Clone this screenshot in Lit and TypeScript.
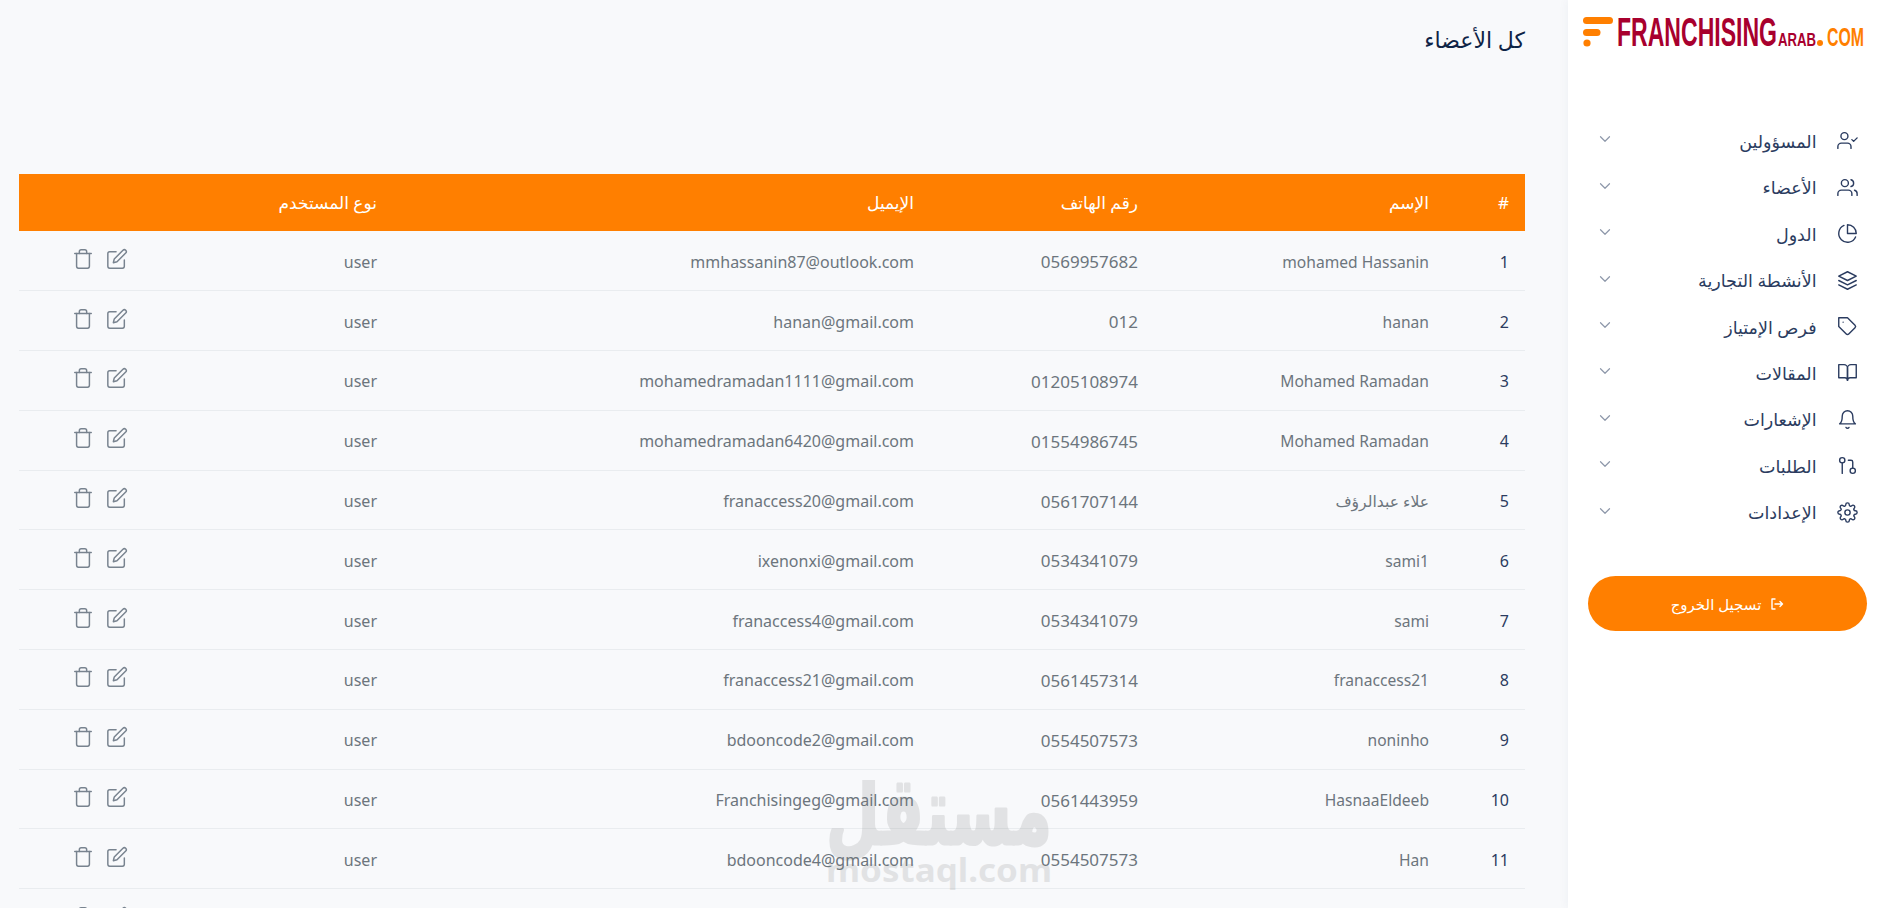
import { LitElement, html, css, svg } from "lit";
import { customElement } from "lit/decorators.js";

const ic = (body: unknown, size = 21) => html`<svg width=${size} height=${size} viewBox="0 0 24 24" fill="none" stroke="currentColor" stroke-width="1.6" stroke-linecap="round" stroke-linejoin="round">${body}</svg>`;

const menu: [string, unknown][] = [
  ["المسؤولين", svg`<path d="M16 21v-2a4 4 0 0 0-4-4H5a4 4 0 0 0-4 4v2"/><circle cx="8.5" cy="7" r="4"/><polyline points="17 11 19 13 23 9"/>`],
  ["الأعضاء", svg`<path d="M17 21v-2a4 4 0 0 0-4-4H5a4 4 0 0 0-4 4v2"/><circle cx="9" cy="7" r="4"/><path d="M23 21v-2a4 4 0 0 0-3-3.87"/><path d="M16 3.13a4 4 0 0 1 0 7.75"/>`],
  ["الدول", svg`<path d="M21.21 15.89A10 10 0 1 1 8 2.83"/><path d="M22 12A10 10 0 0 0 12 2v10z"/>`],
  ["الأنشطة التجارية", svg`<polygon points="12 2 2 7 12 12 22 7 12 2"/><polyline points="2 17 12 22 22 17"/><polyline points="2 12 12 17 22 12"/>`],
  ["فرص الإمتياز", svg`<path d="M20.59 13.41l-7.17 7.17a2 2 0 0 1-2.83 0L2 12V2h10l8.59 8.59a2 2 0 0 1 0 2.82z"/><line x1="7" y1="7" x2="7.01" y2="7"/>`],
  ["المقالات", svg`<path d="M2 3h6a4 4 0 0 1 4 4v14a3 3 0 0 0-3-3H2z"/><path d="M22 3h-6a4 4 0 0 0-4 4v14a3 3 0 0 1 3-3h7z"/>`],
  ["الإشعارات", svg`<path d="M18 8A6 6 0 0 0 6 8c0 7-3 9-3 9h18s-3-2-3-9"/><path d="M13.73 21a2 2 0 0 1-3.46 0"/>`],
  ["الطلبات", svg`<circle cx="18" cy="18" r="3"/><circle cx="6" cy="6" r="3"/><path d="M13 6h3a2 2 0 0 1 2 2v7"/><line x1="6" y1="9" x2="6" y2="21"/>`],
  ["الإعدادات", svg`<circle cx="12" cy="12" r="3"/><path d="M19.4 15a1.65 1.65 0 0 0 .33 1.82l.06.06a2 2 0 0 1 0 2.83 2 2 0 0 1-2.83 0l-.06-.06a1.65 1.65 0 0 0-1.82-.33 1.65 1.65 0 0 0-1 1.51V21a2 2 0 0 1-2 2 2 2 0 0 1-2-2v-.09A1.65 1.65 0 0 0 9 19.4a1.65 1.65 0 0 0-1.82.33l-.06.06a2 2 0 0 1-2.83 0 2 2 0 0 1 0-2.83l.06-.06a1.65 1.65 0 0 0 .33-1.82 1.65 1.65 0 0 0-1.51-1H3a2 2 0 0 1-2-2 2 2 0 0 1 2-2h.09A1.65 1.65 0 0 0 4.6 9a1.65 1.65 0 0 0-.33-1.82l-.06-.06a2 2 0 0 1 0-2.83 2 2 0 0 1 2.83 0l.06.06a1.65 1.65 0 0 0 1.82.33H9a1.65 1.65 0 0 0 1-1.51V3a2 2 0 0 1 2-2 2 2 0 0 1 2 2v.09a1.65 1.65 0 0 0 1 1.51 1.65 1.65 0 0 0 1.82-.33l.06-.06a2 2 0 0 1 2.83 0 2 2 0 0 1 0 2.83l-.06.06a1.65 1.65 0 0 0-.33 1.82V9a1.65 1.65 0 0 0 1.51 1H21a2 2 0 0 1 2 2 2 2 0 0 1-2 2h-.09a1.65 1.65 0 0 0-1.51 1z"/>`],
];

const rows = [
  ["mohamed Hassanin", "0569957682", "mmhassanin87@outlook.com"],
  ["hanan", "012", "hanan@gmail.com"],
  ["Mohamed Ramadan", "01205108974", "mohamedramadan1111@gmail.com"],
  ["Mohamed Ramadan", "01554986745", "mohamedramadan6420@gmail.com"],
  ["علاء عبدالرؤف", "0561707144", "franaccess20@gmail.com"],
  ["sami1", "0534341079", "ixenonxi@gmail.com"],
  ["sami", "0534341079", "franaccess4@gmail.com"],
  ["franaccess21", "0561457314", "franaccess21@gmail.com"],
  ["noninho", "0554507573", "bdooncode2@gmail.com"],
  ["HasnaaEldeeb", "0561443959", "Franchisingeg@gmail.com"],
  ["Han", "0554507573", "bdooncode4@gmail.com"],
];

const actions = html`<div class="acts">
  ${ic(svg`<path d="M11 4H4a2 2 0 0 0-2 2v14a2 2 0 0 0 2 2h14a2 2 0 0 0 2-2v-7"/><path d="M18.5 2.5a2.121 2.121 0 0 1 3 3L12 15l-4 1 1-4 9.5-9.5z"/>`, 22)}
  ${ic(svg`<polyline points="3 6 5 6 21 6"/><path d="M19 6v14a2 2 0 0 1-2 2H7a2 2 0 0 1-2-2V6m3 0V4a2 2 0 0 1 2-2h4a2 2 0 0 1 2 2v2"/>`, 22)}
</div>`;

@customElement("app-root")
export class AppRoot extends LitElement {
  static styles = css`
    :host {
      display: flex;
      flex-direction: row;
      height: 908px;
      overflow: hidden;
      position: relative;
      background: #f8f9fb;
      font-family: "Noto Sans", "Lato", "DejaVu Sans", sans-serif;
      direction: rtl;
    }
    .side {
      width: 310px;
      flex: none;
      height: 908px;
      background: #fff;
      box-shadow: 0 0 10px rgba(40, 60, 100, 0.06);
      box-sizing: border-box;
      padding: 0 20.5px 0 11px;
    }
    .logo { display: block; width: 308px; height: 64px; margin: 5px -20.5px 0 0; direction: ltr; }
    .menu { margin-top: 48.8px; display: flex; flex-direction: column; }
    .item {
      height: 46.4px;
      display: flex;
      align-items: center;
      gap: 20px;
      color: #2b3c60;
      font-size: 17.5px;
    }
    .item svg { flex: none; }
    .item .lbl { flex: 1; }
    .item .chev { display: flex; color: #8e98aa; margin-left: 17px; margin-top: -3px; }
    .logout {
      margin: 41px -9.5px 0 0;
      height: 55px;
      width: 279px;
      border-radius: 28px;
      background: #ff7f00;
      color: #fff;
      font-size: 15px;
      display: flex;
      align-items: center;
      justify-content: center;
      gap: 9px;
    }
    .main { flex: 1; min-width: 0; padding: 0 43px 0 19px; }
    h1 {
      margin: 0;
      height: 174px;
      box-sizing: border-box;
      padding-top: 22px;
      font-size: 22px;
      line-height: 34px;
      font-weight: 400;
      color: #0e2346;
    }
    table { width: 1506px; border-collapse: collapse; table-layout: fixed; font-size: 16px; }
    th {
      background: #ff7f00;
      color: #fff;
      height: 57px;
      padding: 0 16px;
      text-align: right;
      font-weight: 400;
      font-size: 17px;
    }
    td {
      height: 59.8px;
      box-sizing: border-box;
      padding: 2px 16px 0;
      text-align: right;
      color: #6c757d;
      border-bottom: 1px solid #e9ecef;
    }
    td.n { color: #2b3c60; }
    td.name { font-size: 15.6px; }
    td.tel { font-size: 17px; }
    td.act { padding-top: 0; padding-bottom: 4px; }
    .acts { display: flex; gap: 12px; color: #78838f; }
    .wm {
      position: absolute;
      left: 820px;
      top: 780px;
      pointer-events: none;
      direction: ltr;
    }
    .wm g { opacity: 0.18; }
  `;

  render() {
    return html`
      <aside class="side">
        <svg class="logo" viewBox="0 0 308 64">
          <g fill="#ff7f00">
            <rect x="13" y="12" width="30" height="7" rx="3.5" />
            <rect x="13" y="24" width="17.5" height="7" rx="3.5" />
            <circle cx="17" cy="38" r="3.6" />
          </g>
          <text x="47" y="41" textLength="160" lengthAdjust="spacingAndGlyphs" fill="#a8002e" font-family="Liberation Sans" font-weight="700" font-size="40">FRANCHISING</text>
          <text x="208" y="41" textLength="38" lengthAdjust="spacingAndGlyphs" fill="#a8002e" font-family="Liberation Sans" font-weight="700" font-size="18">ARAB</text>
          <circle cx="250" cy="38" r="3" fill="#ff7f00" />
          <text x="257" y="41" textLength="37" lengthAdjust="spacingAndGlyphs" fill="#ff7f00" font-family="Liberation Sans" font-weight="700" font-size="25">COM</text>
        </svg>
        <nav class="menu">
          ${menu.map(
            ([t, i]) => html`<div class="item">
              ${ic(i)}<span class="lbl">${t}</span>
              <span class="chev">${ic(svg`<polyline points="6 9 12 15 18 9"/>`, 18)}</span>
            </div>`
          )}
        </nav>
        <div class="logout">
          <svg width="14" height="14" viewBox="0 0 14 14" fill="none" stroke="#fff" stroke-width="1.4" stroke-linecap="round" stroke-linejoin="round"><path d="M5 2H2v10h3"/><path d="M5 7h7.5M10 4.5 12.5 7 10 9.5"/></svg>
          <span>تسجيل الخروج</span>
        </div>
      </aside>
      <main class="main">
        <h1>كل الأعضاء</h1>
        <table>
          <colgroup><col style="width:80px" /><col style="width:291px" /><col style="width:224px" /><col style="width:537px" /><col style="width:249px" /><col style="width:125px" /></colgroup>
          <thead><tr><th>#</th><th>الإسم</th><th>رقم الهاتف</th><th>الإيميل</th><th>نوع المستخدم</th><th></th></tr></thead>
          <tbody>
            ${rows.map(
              (r, i) => html`<tr><td class="n">${i + 1}</td><td class="name">${r[0]}</td><td class="tel">${r[1]}</td><td>${r[2]}</td><td>user</td><td class="act">${actions}</td></tr>`
            )}
            <tr><td></td><td></td><td></td><td></td><td></td><td class="act">${actions}</td></tr>
          </tbody>
        </table>
      </main>
      <svg class="wm" width="240" height="120" viewBox="0 0 240 120">
        <g>
          <text x="6" y="64" textLength="226" lengthAdjust="spacingAndGlyphs" font-family="DejaVu Sans" font-weight="700" font-size="95" fill="#808080" stroke="#808080" stroke-width="3" stroke-linejoin="round">مستقل</text>
        </g>
        <g>
          <text x="6" y="102" textLength="226" lengthAdjust="spacingAndGlyphs" font-family="Noto Sans" font-weight="700" font-size="33" fill="#808080">mostaql.com</text>
        </g>
      </svg>
    `;
  }
}
